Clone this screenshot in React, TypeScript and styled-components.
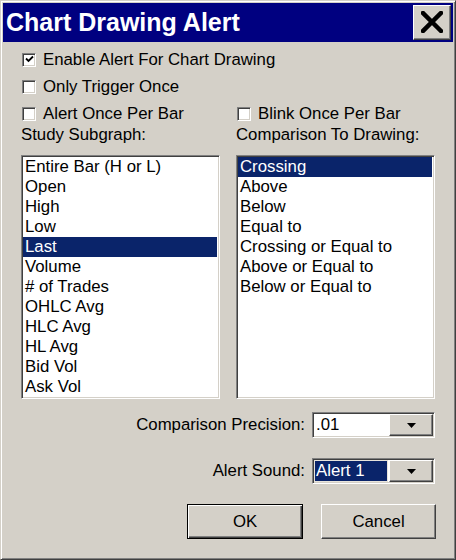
import React from "react";
import styled, { createGlobalStyle, css } from "styled-components";

const GlobalStyle = createGlobalStyle`
  html, body { margin: 0; padding: 0; background: #d4d0c8; }
  body { font-family: "Liberation Sans", Arial, sans-serif; }
  * { box-sizing: border-box; }
`;

const FACE = "#d4d0c8";
const NAVY = "#000080";
const SEL = "#0a246a";

const sunken = css`
  border: 1px solid;
  border-color: #808080 #ffffff #ffffff #808080;
  box-shadow: inset 1px 1px #404040, inset -1px -1px ${FACE};
`;

const raised = css`
  border: 1px solid;
  border-color: #ffffff #404040 #404040 #ffffff;
  box-shadow: inset -1px -1px #808080, inset 1px 1px ${FACE};
`;

const Window = styled.div`
  width: 456px;
  height: 560px;
  background: ${FACE};
  border: 1px solid;
  border-color: ${FACE} #404040 #404040 ${FACE};
  box-shadow: inset 1px 1px #ffffff, inset -1px -1px #808080;
  padding: 2px;
  display: flex;
  flex-direction: column;
  font-family: "Liberation Sans", Arial, sans-serif;
  font-size: 16.8px;
  color: #000;
`;

const TitleBar = styled.div`
  height: 39px;
  background: ${NAVY};
  display: flex;
  align-items: center;
  justify-content: space-between;
  padding: 0 2px 1px 3px;
`;

const Title = styled.div`
  color: #fff;
  font-weight: bold;
  font-size: 25px;
  white-space: nowrap;
`;

const CloseButton = styled.div`
  width: 38px;
  height: 35px;
  background: ${FACE};
  ${raised};
  display: flex;
  align-items: center;
  justify-content: center;
`;

const Body = styled.div`
  padding: 4px 18px 0 18px;
  display: flex;
  flex-direction: column;
`;

const CheckRow = styled.label`
  height: 27px;
  display: flex;
  align-items: center;
  gap: 7px;
  padding-left: 1px;
  white-space: nowrap;
  line-height: 20px;
`;

const CheckBox = styled.span`
  width: 14px;
  height: 14px;
  background: #fff;
  ${sunken};
  display: flex;
  align-items: center;
  justify-content: center;
  flex: none;
`;

const Columns = styled.div`
  display: grid;
  grid-template-columns: 199px 199px;
  column-gap: 16px;
`;

const Column = styled.div`
  display: flex;
  flex-direction: column;
`;

const GroupLabel = styled.div`
  height: 20px;
  line-height: 20px;
  margin: -2px 0 10px 0;
  white-space: nowrap;
`;

const ListBox = styled.div`
  height: 244px;
  background: #fff;
  ${sunken};
  padding: 1px 2px 0 1px;
  display: flex;
  flex-direction: column;
`;

const ListItem = styled.div<{ $selected?: boolean }>`
  height: 20px;
  line-height: 20px;
  padding-left: 2px;
  white-space: nowrap;
  background: ${(p) => (p.$selected ? SEL : "transparent")};
  color: ${(p) => (p.$selected ? "#fff" : "#000")};
`;

const FieldRow = styled.div<{ $top: number }>`
  margin-top: ${(p) => p.$top}px;
  height: 26px;
  display: flex;
  align-items: center;
  justify-content: flex-end;
  gap: 7px;
  white-space: nowrap;
`;

const Combo = styled.div`
  width: 123px;
  height: 26px;
  ${sunken};
  background: #fff;
  padding: 1px;
  display: flex;
`;

const ComboField = styled.div<{ $focused?: boolean }>`
  flex: 1;
  margin-right: 1px;
  padding-left: 1px;
  line-height: 22px;
  height: 22px;
  background: ${(p) => (p.$focused ? SEL : "#fff")};
  color: ${(p) => (p.$focused ? "#fff" : "#000")};
  border: 1px solid ${(p) => (p.$focused ? "#e8e4dc" : "transparent")};
  line-height: 20px;
`;

const ComboButton = styled.div`
  width: 44px;
  height: 22px;
  background: ${FACE};
  ${raised};
  display: flex;
  align-items: center;
  justify-content: center;
`;

const ButtonRow = styled.div`
  margin-top: 20px;
  display: flex;
  justify-content: flex-end;
  gap: 18px;
  margin-right: -1px;
`;

const PushButton = styled.div<{ $default?: boolean; $width: number }>`
  width: ${(p) => p.$width}px;
  height: 35px;
  background: ${FACE};
  display: flex;
  align-items: center;
  justify-content: center;
  border: 1px solid;
  ${(p) =>
    p.$default
      ? css`
          border-color: #000;
          box-shadow: inset 1px 1px #ffffff, inset -1px -1px #404040,
            inset -2px -2px #808080;
        `
      : css`
          border-color: #ffffff #404040 #404040 #ffffff;
          box-shadow: inset -1px -1px #808080;
        `}
`;

const CheckMark = () => (
  <svg width="9" height="9" viewBox="0 0 9 9">
    <path d="M1 3.5 L3.5 6 L8 1.5" stroke="#000" strokeWidth="1.8" fill="none" />
  </svg>
);

const CloseX = () => (
  <svg width="22" height="22" viewBox="0 0 22 22">
    <path d="M2 2 L20 20 M20 2 L2 20" stroke="#000" strokeWidth="4.5" strokeLinecap="square" />
  </svg>
);

const DownArrow = () => (
  <svg width="9" height="5" viewBox="0 0 9 5">
    <path d="M0 0 H9 L4.5 5 Z" fill="#000" />
  </svg>
);

const Check = ({ checked, label }: { checked?: boolean; label: string }) => (
  <CheckRow>
    <CheckBox>{checked && <CheckMark />}</CheckBox>
    <span>{label}</span>
  </CheckRow>
);

const subgraphs = [
  "Entire Bar (H or L)",
  "Open",
  "High",
  "Low",
  "Last",
  "Volume",
  "# of Trades",
  "OHLC Avg",
  "HLC Avg",
  "HL Avg",
  "Bid Vol",
  "Ask Vol",
];

const comparisons = [
  "Crossing",
  "Above",
  "Below",
  "Equal to",
  "Crossing or Equal to",
  "Above or Equal to",
  "Below or Equal to",
];

export default function App() {
  return (
    <>
      <GlobalStyle />
      <Window>
        <TitleBar>
          <Title>Chart Drawing Alert</Title>
          <CloseButton>
            <CloseX />
          </CloseButton>
        </TitleBar>
        <Body>
          <Check checked label="Enable Alert For Chart Drawing" />
          <Check label="Only Trigger Once" />
          <Columns>
            <Column>
              <Check label="Alert Once Per Bar" />
              <GroupLabel>Study Subgraph:</GroupLabel>
              <ListBox>
                {subgraphs.map((s) => (
                  <ListItem key={s} $selected={s === "Last"}>
                    {s}
                  </ListItem>
                ))}
              </ListBox>
            </Column>
            <Column>
              <Check label="Blink Once Per Bar" />
              <GroupLabel>Comparison To Drawing:</GroupLabel>
              <ListBox>
                {comparisons.map((s) => (
                  <ListItem key={s} $selected={s === "Crossing"}>
                    {s}
                  </ListItem>
                ))}
              </ListBox>
            </Column>
          </Columns>
          <FieldRow $top={13}>
            <span>Comparison Precision:</span>
            <Combo>
              <ComboField>.01</ComboField>
              <ComboButton>
                <DownArrow />
              </ComboButton>
            </Combo>
          </FieldRow>
          <FieldRow $top={20}>
            <span>Alert Sound:</span>
            <Combo>
              <ComboField $focused>Alert 1</ComboField>
              <ComboButton>
                <DownArrow />
              </ComboButton>
            </Combo>
          </FieldRow>
          <ButtonRow>
            <PushButton $default $width={116}>OK</PushButton>
            <PushButton $width={115}>Cancel</PushButton>
          </ButtonRow>
        </Body>
      </Window>
    </>
  );
}
